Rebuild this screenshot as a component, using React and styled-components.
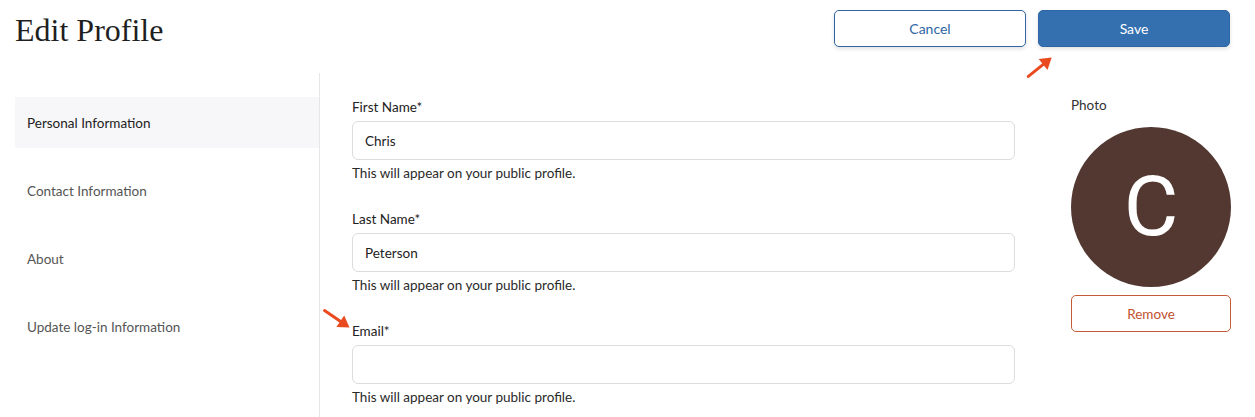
import React from "react";
import styled, { createGlobalStyle } from "styled-components";

const GlobalStyle = createGlobalStyle`
  html, body {
    margin: 0;
    padding: 0;
    background: #fff;
  }
  body {
    font-family: Lato, "Noto Sans", sans-serif;
    color: #222;
  }
`;

const menu = [
  "Personal Information",
  "Contact Information",
  "About",
  "Update log-in Information",
];

const fields = [
  { label: "First Name*", value: "Chris" },
  { label: "Last Name*", value: "Peterson" },
  { label: "Email*", value: "" },
];

const Arrow = ({ rotate, ...rest }) => (
  <ArrowSvg width="34" height="26" viewBox="0 0 34 26" {...rest}>
    <g transform={`rotate(${rotate} 17 13)`}>
      <line x1="2" y1="13" x2="24" y2="13" stroke="#ea4a1f" strokeWidth="3" strokeLinecap="round" />
      <polygon points="21,6 32,13 21,20" fill="#ea4a1f" />
    </g>
  </ArrowSvg>
);

const App = () => {
  return (
    <Page>
      <GlobalStyle />
      <Header>
        <Title>Edit Profile</Title>
        <Actions>
          <Button>Cancel</Button>
          <Button primary>Save</Button>
        </Actions>
      </Header>
      <Body>
        <Sidebar>
          {menu.map((item, index) => (
            <MenuItem key={item} active={index === 0}>
              {item}
            </MenuItem>
          ))}
        </Sidebar>
        <Main>
          <Form>
            {fields.map((f) => (
              <Field key={f.label}>
                <Label>{f.label}</Label>
                <Input defaultValue={f.value} />
                <Help>This will appear on your public profile.</Help>
              </Field>
            ))}
          </Form>
          <PhotoCol>
            <PhotoLabel>Photo</PhotoLabel>
            <Avatar>C</Avatar>
            <RemoveButton>Remove</RemoveButton>
          </PhotoCol>
        </Main>
      </Body>
      <Arrow rotate={-39} style={{ left: 1023, top: 54 }} />
      <Arrow rotate={34} style={{ left: 320, top: 306 }} />
    </Page>
  );
};

const Page = styled.div`
  position: relative;
  width: 1255px;
  height: 417px;
  overflow: hidden;
`;

const Header = styled.div`
  display: flex;
  justify-content: space-between;
  align-items: flex-start;
  padding: 10px 25px 0 15px;
  height: 73px;
  box-sizing: border-box;
`;

const Title = styled.h1`
  margin: 4px 0 0;
  font-family: "Liberation Serif", "DejaVu Serif", serif;
  font-weight: 400;
  font-size: 32px;
  line-height: 32px;
  color: #1f1f1f;
`;

const Actions = styled.div`
  display: flex;
  gap: 12px;
`;

const Button = styled.button`
  width: 192px;
  height: 37px;
  border-radius: 5px;
  border: 1px solid #2f66a3;
  background: ${(p) => (p.primary ? "#3470b0" : "#fff")};
  color: ${(p) => (p.primary ? "#fff" : "#2f66a3")};
  font-family: Lato, "Noto Sans", sans-serif;
  font-size: 14px;
  cursor: pointer;
  box-shadow: 0 2px 4px rgba(0, 0, 0, 0.12);
`;

const Body = styled.div`
  display: flex;
`;

const Sidebar = styled.div`
  width: 304px;
  margin-left: 15px;
  padding-top: 24px;
  min-height: 344px;
  border-right: 1px solid #e6e6e6;
  display: flex;
  flex-direction: column;
  gap: 17px;
`;

const MenuItem = styled.div`
  height: 51px;
  display: flex;
  align-items: center;
  padding-left: 12px;
  font-size: 13.5px;
  background: ${(p) => (p.active ? "#f7f7f9" : "transparent")};
  color: ${(p) => (p.active ? "#222" : "#555")};
`;

const Main = styled.div`
  display: flex;
  padding-left: 32px;
  gap: 56px;
`;

const Form = styled.div`
  width: 663px;
  padding-top: 26px;
  display: flex;
  flex-direction: column;
  gap: 30px;
`;

const Field = styled.div`
  display: flex;
  flex-direction: column;
`;

const Label = styled.label`
  font-size: 13.5px;
  line-height: 16px;
  color: #222;
  margin-bottom: 6px;
`;

const Input = styled.input`
  height: 39px;
  box-sizing: border-box;
  border: 1px solid #dcdcdc;
  border-radius: 6px;
  padding: 0 12px;
  font-family: Lato, "Noto Sans", sans-serif;
  font-size: 13.5px;
  color: #222;
  outline: none;
`;

const Help = styled.div`
  margin-top: 5px;
  font-size: 13.5px;
  line-height: 16px;
  color: #2a2a2a;
`;

const PhotoCol = styled.div`
  width: 160px;
  padding-top: 24px;
  display: flex;
  flex-direction: column;
`;

const PhotoLabel = styled.div`
  font-size: 13.5px;
  line-height: 16px;
  color: #333;
  margin-bottom: 14px;
`;

const Avatar = styled.div`
  width: 160px;
  height: 160px;
  border-radius: 50%;
  background: #523830;
  color: #fff;
  display: flex;
  align-items: center;
  justify-content: center;
  font-family: Roboto, sans-serif;
  font-size: 84px;
  line-height: 1;
`;

const RemoveButton = styled.button`
  margin-top: 8px;
  height: 37px;
  border-radius: 5px;
  border: 1px solid #c45a3a;
  background: #fff;
  color: #c0502e;
  font-family: Lato, "Noto Sans", sans-serif;
  font-size: 13.5px;
  cursor: pointer;
`;

const ArrowSvg = styled.svg`
  position: absolute;
  overflow: visible;
`;

export default App;
